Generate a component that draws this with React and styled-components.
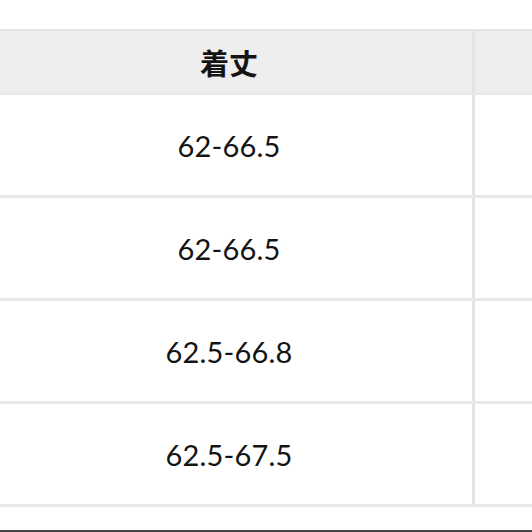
import React from 'react'
import styled, { createGlobalStyle } from 'styled-components'

const GlobalStyle = createGlobalStyle`
  html, body {
    margin: 0;
    padding: 0;
    background: #ffffff;
    overflow: hidden;
  }
  body {
    font-family: Lato, "Noto Sans CJK JP", sans-serif;
    color: #141414;
  }
`

const Page = styled.div`
  width: 532px;
  height: 532px;
  display: flex;
  flex-direction: column;
  padding-top: 29px;
  box-sizing: border-box;
  overflow: hidden;
`

const Table = styled.div`
  display: flex;
  flex-direction: column;
  margin-left: -14px;
  width: 600px;
`

const Row = styled.div`
  display: grid;
  grid-template-columns: 489px 1fr;
  height: ${(p) => (p.$head ? '66px' : '103px')};
  background: ${(p) => (p.$head ? '#eeeeee' : '#ffffff')};
  border-top: ${(p) => (p.$head ? '2px solid #e4e4e4' : 'none')};
  border-bottom: 3px solid #e8e8e8;
  box-sizing: border-box;
`

const Cell = styled.div`
  display: flex;
  align-items: center;
  justify-content: center;
  border-right: ${(p) => (p.$last ? 'none' : '3px solid #e4e4e4')};
  font-family: ${(p) =>
    p.$head ? '"Noto Sans CJK JP", sans-serif' : 'Lato, "Liberation Sans", sans-serif'};
  font-size: ${(p) => (p.$head ? '29px' : '29px')};
  font-weight: ${(p) => (p.$head ? 700 : 400)};
  letter-spacing: ${(p) => (p.$head ? '0' : '0.2px')};
  color: #141414;
`

const Frame = styled.div`
  margin-top: auto;
  height: 2px;
  background: #474747;
`

const rows = ['62-66.5', '62-66.5', '62.5-66.8', '62.5-67.5']

const App = () => {
  return (
    <>
      <GlobalStyle />
      <Page>
        <Table>
          <Row $head>
            <Cell $head>着丈</Cell>
            <Cell $head $last />
          </Row>
          {rows.map((value, i) => (
            <Row key={i}>
              <Cell>{value}</Cell>
              <Cell $last />
            </Row>
          ))}
        </Table>
        <Frame />
      </Page>
    </>
  )
}

export default App
